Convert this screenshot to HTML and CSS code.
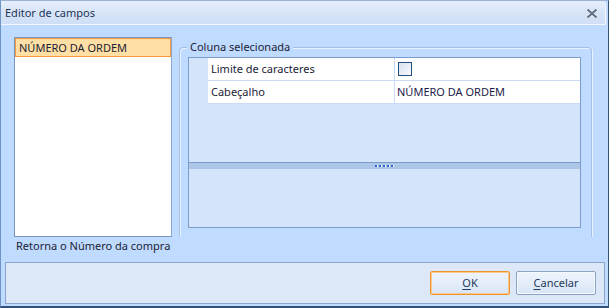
FILE: index.html
```html
<!DOCTYPE html>
<html>
<head>
<meta charset="utf-8">
<link rel="stylesheet" href="styles.css">
</head>
<body>
<div class="window">
  <div class="titlebar">
    <span class="title">Editor de campos</span>
    <svg class="close" width="12" height="11" viewBox="0 0 12 11">
      <path d="M1.5 1.5 L10.5 9.5 M10.5 1.5 L1.5 9.5" stroke="#e9eef6" stroke-width="3.2" fill="none"/>
      <path d="M1.5 1.5 L10.5 9.5 M10.5 1.5 L1.5 9.5" stroke="#5e6c83" stroke-width="1.8" fill="none"/>
    </svg>
  </div>
  <div class="main">
    <div class="leftcol">
      <div class="list">
        <div class="item selected">NÚMERO DA ORDEM</div>
      </div>
      <div class="desc">Retorna o Número da compra</div>
    </div>
    <div class="group">
      <div class="legend">Coluna selecionada</div>
      <div class="grid">
        <div class="rows">
          <div class="row">
            <div class="margin"></div>
            <div class="name">Limite de caracteres</div>
            <div class="value"><span class="check"></span></div>
          </div>
          <div class="row">
            <div class="margin"></div>
            <div class="name">Cabeçalho</div>
            <div class="value">NÚMERO DA ORDEM</div>
          </div>
        </div>
        <div class="splitter"><span class="grip"></span></div>
        <div class="help"></div>
      </div>
    </div>
  </div>
  <div class="footer">
    <button class="btn default"><u>O</u>K</button>
    <button class="btn"><u>C</u>ancelar</button>
  </div>
</div>
</body>
</html>
```

FILE: styles.css
```css
* { box-sizing: border-box; }
html, body { margin: 0; padding: 0; }
body {
  font-family: "Noto Sans", "Open Sans", sans-serif;
  font-size: 11px;
  color: #1b2236;
  background: #bfdbff;
}
.window {
  width: 609px;
  height: 308px;
  background: #bfdbff;
  border-left: 1px solid #6f93c6;
  border-top: 1px solid #9db3cf;
  border-right: 1px solid #33507a;
  border-bottom: 2px solid #33507a;
  display: flex;
  flex-direction: column;
}
.window > * { flex-shrink: 0; }
.titlebar {
  height: 24px;
  display: flex;
  align-items: center;
  justify-content: space-between;
  padding: 0 7px 0 4px;
  background: linear-gradient(#e5eefb, #d6e4f7 55%, #cfdff5);
  border-bottom: 1px solid #f3f7fd;
  border-right: 1px solid #f3f7fd;
  border-top-right-radius: 4px;
  margin-right: 2px;
}
.title {
  color: #1f3556;
  font-size: 11px;
  line-height: 16px;
}
.close { display: block; margin-top: 1px; }
.main {
  display: flex;
  height: 237px;
  padding: 12px 0 0 13px;
}
.leftcol {
  width: 158px;
  display: flex;
  flex-direction: column;
}
.list {
  height: 200px;
  background: #fff;
  border: 1px solid #7996c0;
  border-right-color: #8aa6cc;
}
.item {
  height: 19px;
  line-height: 17px;
  padding-left: 3px;
  color: #1b2236;
  white-space: nowrap;
}
.item.selected {
  background: #ffdfa3;
  border: 1px solid #f29a3c;
}
.desc {
  margin-top: 1px;
  line-height: 16px;
  padding-left: 2px;
  color: #1b2236;
  white-space: nowrap;
}
.group {
  position: relative;
  margin-left: 7px;
  margin-top: 10px;
  width: 413px;
  height: 190px;
  border: 1px solid #a6c0e3;
  border-bottom: none;
  border-top-left-radius: 4px;
  border-top-right-radius: 4px;
  box-shadow: inset 1px 1px 0 #e9f1fc, 1px 0 0 #e9f1fc;
  padding: 9px 0 0 8px;
}
.legend {
  position: absolute;
  left: 7px;
  top: -9px;
  padding: 0 3px 0 3px;
  background: #bfdbff;
  line-height: 16px;
  color: #1b2236;
  white-space: nowrap;
}
.grid {
  width: 393px;
  height: 171px;
  border: 1px solid #7b9dcb;
  background: #d4e5fb;
  display: flex;
  flex-direction: column;
}
.rows {
  height: 104px;
  flex-shrink: 0;
}
.row {
  display: flex;
  height: 23px;
}
.margin {
  width: 19px;
  background: #d4e5fb;
}
.name {
  width: 187px;
  background: #fff;
  border-bottom: 1px solid #c9dcf4;
  border-right: 1px solid #c9dcf4;
  padding-left: 3px;
  line-height: 22px;
  white-space: nowrap;
}
.value {
  flex: 1;
  background: #fff;
  border-bottom: 1px solid #c9dcf4;
  padding-left: 2px;
  line-height: 22px;
  color: #241a4a;
  display: flex;
  align-items: center;
  white-space: nowrap;
}
.check {
  display: block;
  width: 14px;
  height: 14px;
  margin-left: 1px;
  border: 1px solid #204f82;
  background: linear-gradient(135deg, #d9e2ee, #f7f9fc);
}
.splitter {
  height: 7px;
  flex-shrink: 0;
  border-top: 1px solid #7b9dcb;
  background: #adc6e8;
  display: flex;
  justify-content: center;
  align-items: center;
}
.grip {
  display: block;
  width: 19px;
  height: 2px;
  background: repeating-linear-gradient(90deg, #2e63c4 0 2px, #f2f6fc 2px 3px, transparent 3px 4px);
}
.help {
  flex: 1;
  background: #d4e5fb;
}
.footer {
  margin: 0 3px 0 4px;
  height: 42px;
  border: 1px solid #8ba6ca;
  background: #dce8f8;
  display: flex;
  justify-content: flex-end;
  align-items: flex-start;
  padding: 8px 8px 0 0;
  gap: 6px;
}
.btn {
  width: 80px;
  height: 24px;
  font-family: "Noto Sans", "Open Sans", sans-serif;
  font-size: 11px;
  color: #1e395b;
  border: 1px solid #8aa2c4;
  border-radius: 2px;
  background: linear-gradient(#eef4fd, #e4edfa 50%, #d8e5f6);
  box-shadow: inset 0 0 0 1px #f5f8fd;
  padding: 0;
  line-height: 20px;
}
.btn.default {
  border-color: #f2942d;
  box-shadow: inset 0 0 0 1px #f9c98f;
}
.btn u { text-underline-offset: 2px; }
```
